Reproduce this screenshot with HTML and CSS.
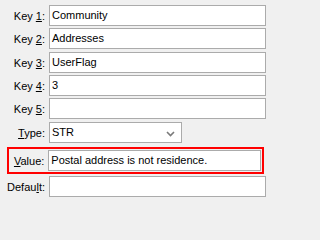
FILE: index.html
```html
<!DOCTYPE html>
<html>
<head>
<meta charset="utf-8">
<link rel="stylesheet" href="styles.css">
</head>
<body>
<div class="form">
  <div class="row"><label class="lbl">Key <u>1</u>:</label><div class="field">Community</div></div>
  <div class="row"><label class="lbl">Key <u>2</u>:</label><div class="field">Addresses</div></div>
  <div class="row nudge"><label class="lbl">Key <u>3</u>:</label><div class="field">UserFlag</div></div>
  <div class="row"><label class="lbl">Key <u>4</u>:</label><div class="field">3</div></div>
  <div class="row"><label class="lbl">Key <u>5</u>:</label><div class="field"></div></div>
  <div class="row nudge"><label class="lbl"><u>T</u>ype:</label>
    <div class="field select">STR
      <svg class="chev" width="9" height="6" viewBox="0 0 9 6"><path d="M1 1 L4.5 4.5 L8 1" fill="none" stroke="#7a7a7a" stroke-width="1.6"/></svg>
    </div>
  </div>
  <div class="row highlight"><label class="lbl"><u>V</u>alue:</label><div class="field">Postal address is not residence.</div></div>
  <div class="row"><label class="lbl">Defau<u>l</u>t:</label><div class="field"></div></div>
</div>
</body>
</html>
```
FILE: styles.css
```css
html, body {
  margin: 0;
  padding: 0;
  background: #f0f0f0;
}
body {
  font-family: "Liberation Sans", Arial, sans-serif;
  font-size: 11px;
  color: #000;
  width: 271px;
  height: 202px;
  overflow: hidden;
}
.form {
  display: flex;
  flex-direction: column;
  gap: 2px;
  padding: 5px 5px 0 4px;
}
.row {
  display: flex;
  align-items: center;
  height: 21px;
}
.row.nudge {
  margin-top: 1px;
}
.lbl {
  width: 41px;
  text-align: right;
  padding-right: 4px;
  white-space: nowrap;
}
.field {
  position: relative;
  box-sizing: border-box;
  width: 217px;
  height: 21px;
  border: 1px solid #ababab;
  background: #fff;
  padding: 0 2px;
  line-height: 19px;
  white-space: nowrap;
}
.field.select {
  width: 133px;
}
.chev {
  position: absolute;
  right: 6px;
  top: 8px;
}
.highlight {
  box-sizing: border-box;
  height: 27px;
  margin: 2px 2px 0 3px;
  padding: 0 1px 0 3px;
  border: 2px solid #ff0000;
}
.highlight .lbl {
  width: 33px;
}
```
